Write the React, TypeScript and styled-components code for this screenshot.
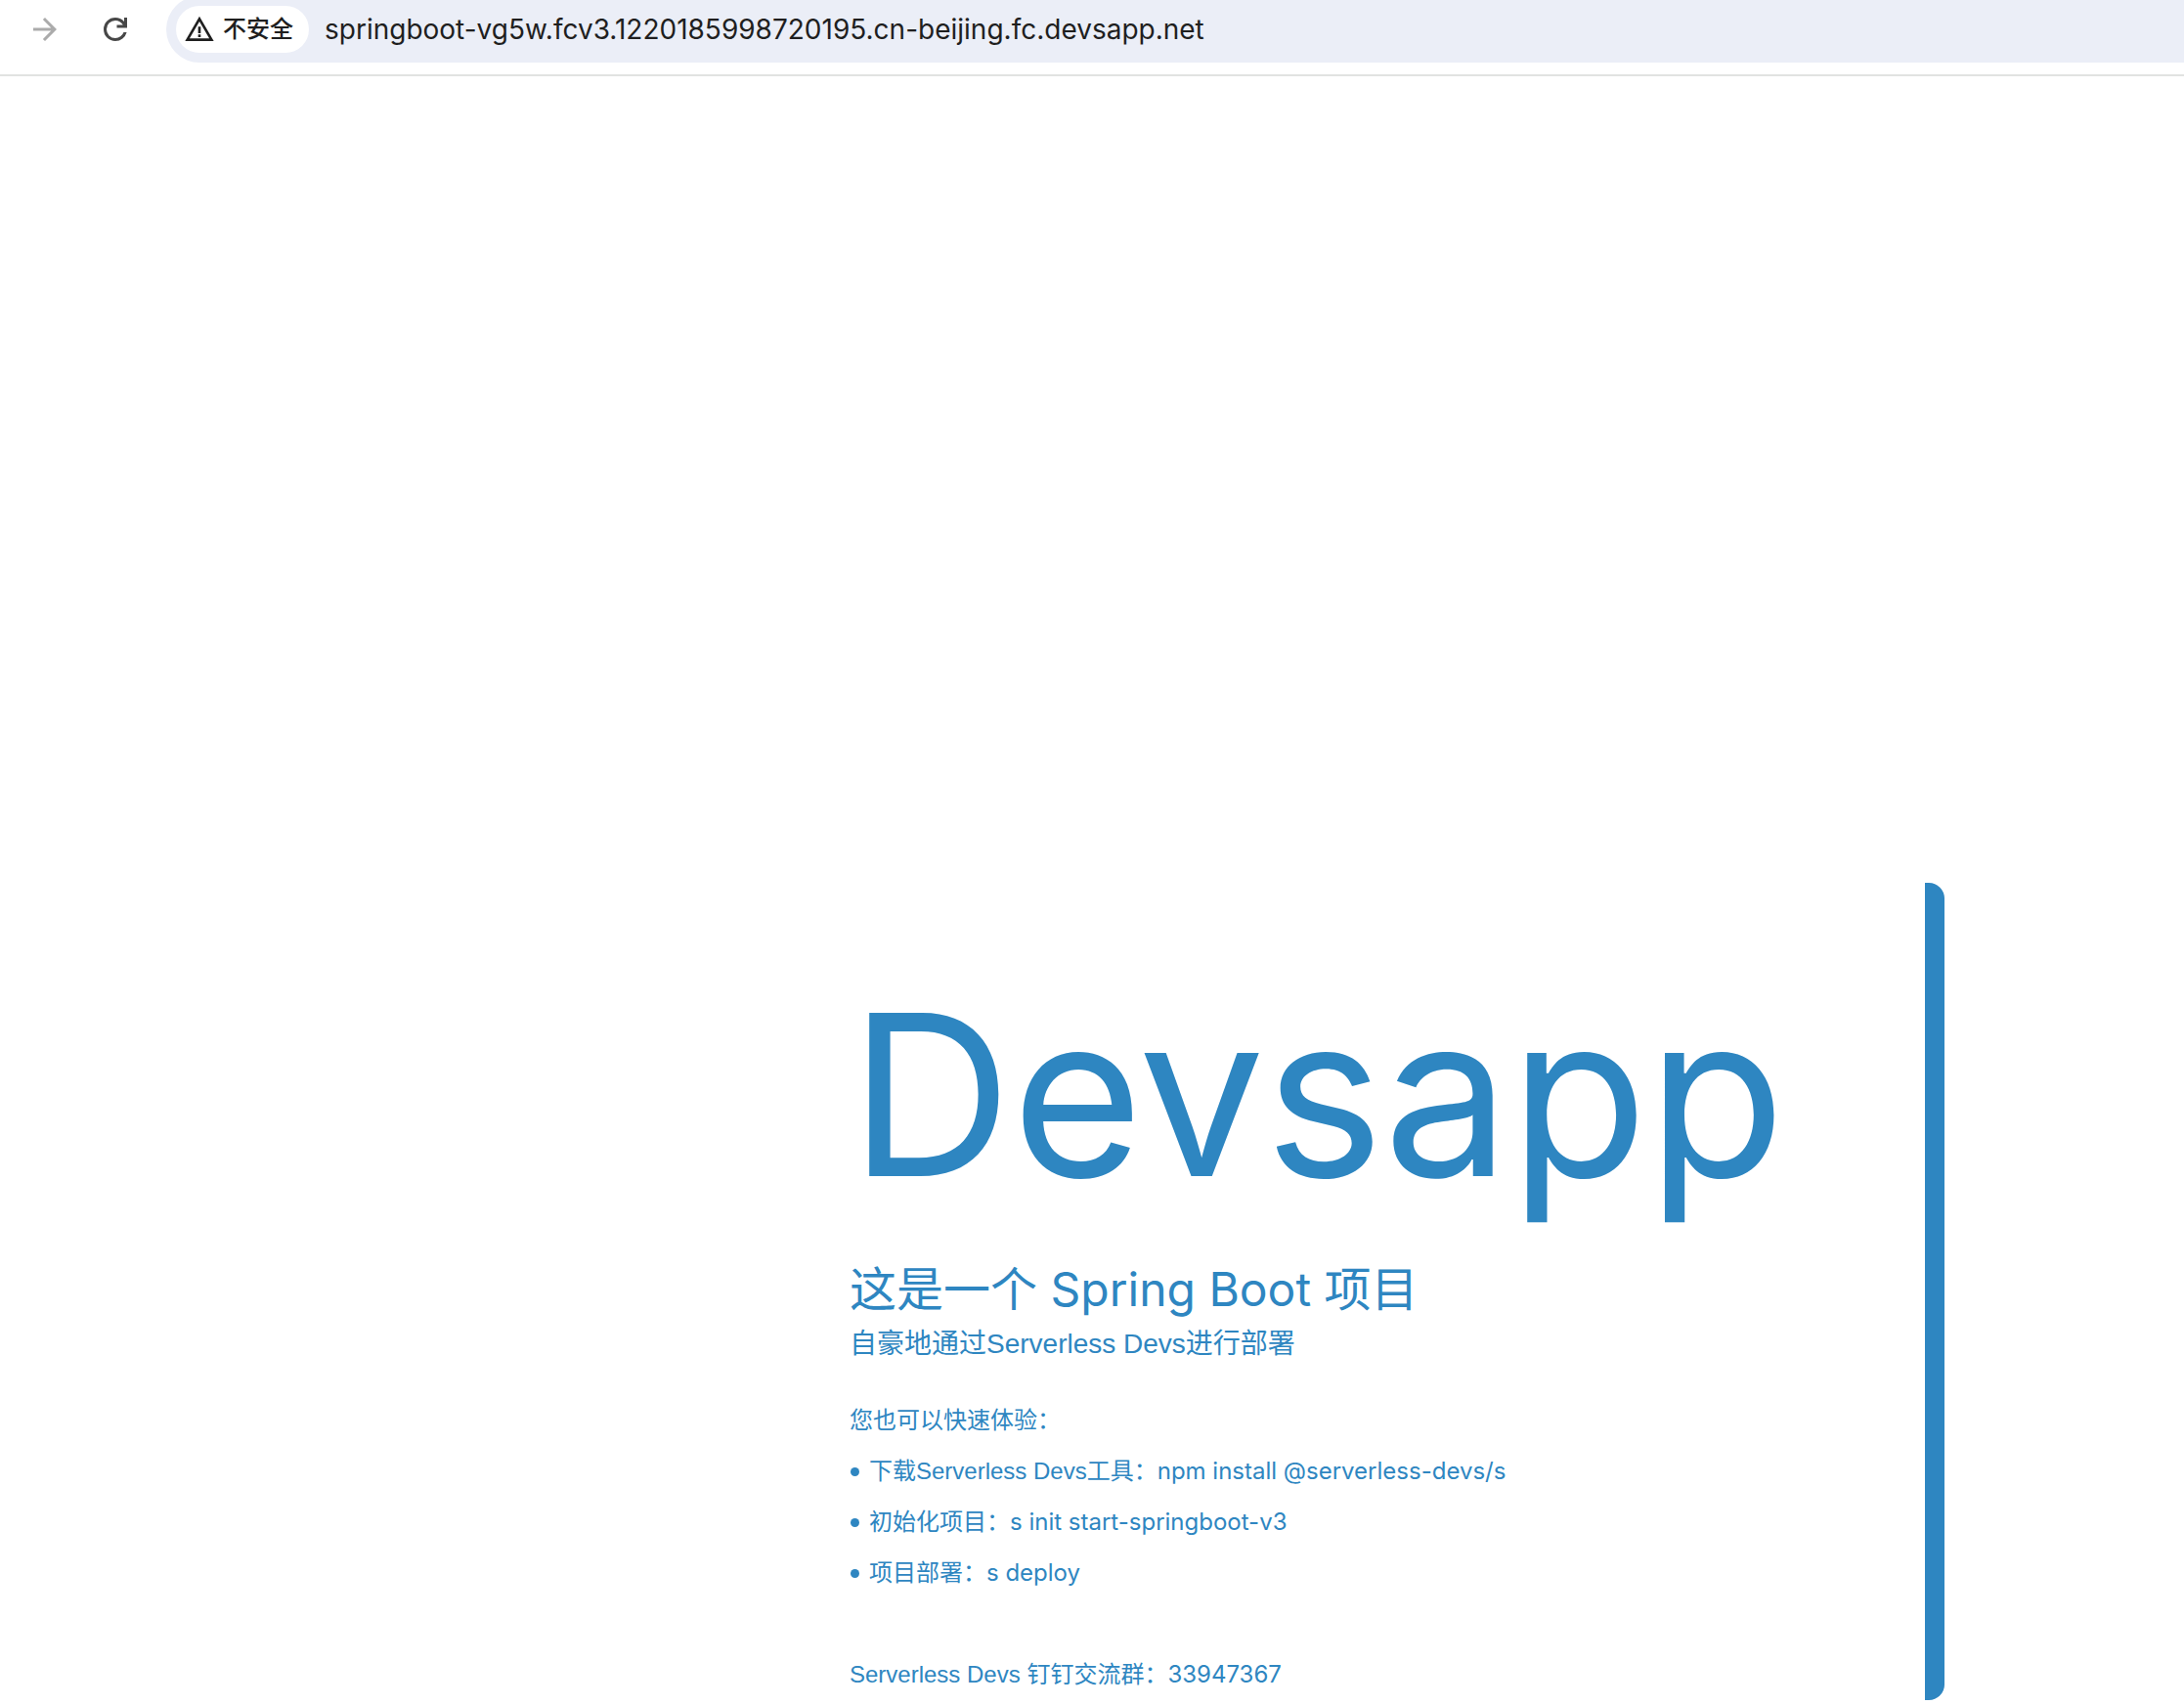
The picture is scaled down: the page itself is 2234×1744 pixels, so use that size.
import React from "react";
import styled, { createGlobalStyle } from "styled-components";

const brand = "#2e86c1";
const sans = `"Liberation Sans", "Noto Sans CJK SC", sans-serif`;
const ui = `Inter, "Noto Sans CJK SC", sans-serif`;

const GlobalStyle = createGlobalStyle`
  * { box-sizing: border-box; }
  body { margin: 0; background: #fff; font-family: ${sans}; }
`;

const Toolbar = styled.header`
  display: flex;
  align-items: flex-start;
  height: 78px;
  padding-left: 28px;
  overflow: hidden;
  border-bottom: 2px solid #e1e3e1;
`;

const NavButton = styled.button<{ $muted?: boolean }>`
  display: flex;
  flex: none;
  margin: 12px 36px 0 0;
  padding: 0;
  border: 0;
  background: none;
  color: ${(p) => (p.$muted ? "#ababab" : "#474747")};
`;

const Omnibox = styled.div`
  display: flex;
  flex: 1;
  align-items: center;
  gap: 16px;
  height: 68px;
  margin: -4px 0 0 -2px;
  padding-left: 10px;
  border-radius: 34px 0 0 34px;
  background: #ebeef7;
  color: #1f1f1f;
`;

const SecurityChip = styled.button`
  display: flex;
  flex: none;
  align-items: center;
  gap: 8px;
  height: 48px;
  padding: 0 16px 0 8px;
  border: 0;
  border-radius: 24px;
  background: #fff;
  color: inherit;
  font: 500 24px/32px ${ui};
`;

const AddressInput = styled.input`
  flex: 1;
  min-width: 0;
  padding: 0;
  border: 0;
  outline: 0;
  background: none;
  color: inherit;
  font: 400 28px/40px ${ui};
`;

const Icon = styled.svg`
  display: block;
  fill: currentColor;
`;

const Page = styled.main`
  padding: 825px 245px 4px 869px;
`;

const Hero = styled.section`
  padding-top: 96px;
  border-right: 20px solid ${brand};
  border-radius: 0 16px 16px 0;
  color: ${brand};
`;

const Brand = styled.h1`
  margin: 0 0 52px;
  font: 400 230px/240px ${ui};
`;

const Title = styled.h2`
  margin: 0 0 8px;
  font: 400 48px/56px ${ui};
`;

const Subtitle = styled.p`
  margin: 0 0 32px;
  font-size: 28px;
  line-height: 40px;
`;

const Text = styled.p`
  margin: 0;
  font-size: 24px;
  line-height: 52px;
`;

const Steps = styled.ul`
  margin: 0 0 52px;
  padding: 0;
  list-style: none;
  font-size: 24px;
  line-height: 52px;
`;

const Step = styled.li`
  display: flex;
  align-items: center;

  &::before {
    content: "";
    width: 9px;
    height: 9px;
    margin: 0 10px 0 1px;
    border-radius: 50%;
    background: ${brand};
  }
`;

const Command = styled.code`
  font-family: ${ui};
`;

const GroupNumber = styled.span`
  font-family: ${ui};
  line-height: 1;
`;

const steps = [
  { label: "下载Serverless Devs工具：", command: "npm install @serverless-devs/s" },
  { label: "初始化项目：", command: "s init start-springboot-v3" },
  { label: "项目部署：", command: "s deploy" },
];

export default function App() {
  return (
    <>
      <GlobalStyle />
      <Toolbar>
        <NavButton $muted aria-label="前进">
          <Icon width="36" height="36" viewBox="0 -960 960 960">
            <path d="M647-440H160v-80h487L423-744l57-56 320 320-320 320-57-56 224-224Z" />
          </Icon>
        </NavButton>
        <NavButton aria-label="重新加载">
          <Icon width="36" height="36" viewBox="0 -960 960 960">
            <path d="M480-160q-134 0-227-93t-93-227q0-134 93-227t227-93q69 0 132 28.5T720-690v-110h80v280H520v-80h168q-32-56-87.5-88T480-720q-100 0-170 70t-70 170q0 100 70 170t170 70q77 0 139-44t87-116h84q-28 106-114 173t-196 67Z" />
          </Icon>
        </NavButton>
        <Omnibox>
          <SecurityChip>
            <Icon width="32" height="32" viewBox="0 -960 960 960">
              <path d="m40-120 440-760 440 760H40Zm138-80h604L480-720 178-200Zm262-40h80v-80h-80v80Zm0-120h80v-200h-80v200Z" />
            </Icon>
            不安全
          </SecurityChip>
          <AddressInput
            aria-label="地址栏"
            spellCheck={false}
            defaultValue="springboot-vg5w.fcv3.1220185998720195.cn-beijing.fc.devsapp.net"
          />
        </Omnibox>
      </Toolbar>
      <Page>
        <Hero>
          <Brand>Devsapp</Brand>
          <Title>这是一个 Spring Boot 项目</Title>
          <Subtitle>自豪地通过Serverless Devs进行部署</Subtitle>
          <Text>您也可以快速体验：</Text>
          <Steps>
            {steps.map((step) => (
              <Step key={step.command}>
                <span>{step.label}</span>
                <Command>{step.command}</Command>
              </Step>
            ))}
          </Steps>
          <Text>
            Serverless Devs 钉钉交流群：<GroupNumber>33947367</GroupNumber>
          </Text>
        </Hero>
      </Page>
    </>
  );
}
